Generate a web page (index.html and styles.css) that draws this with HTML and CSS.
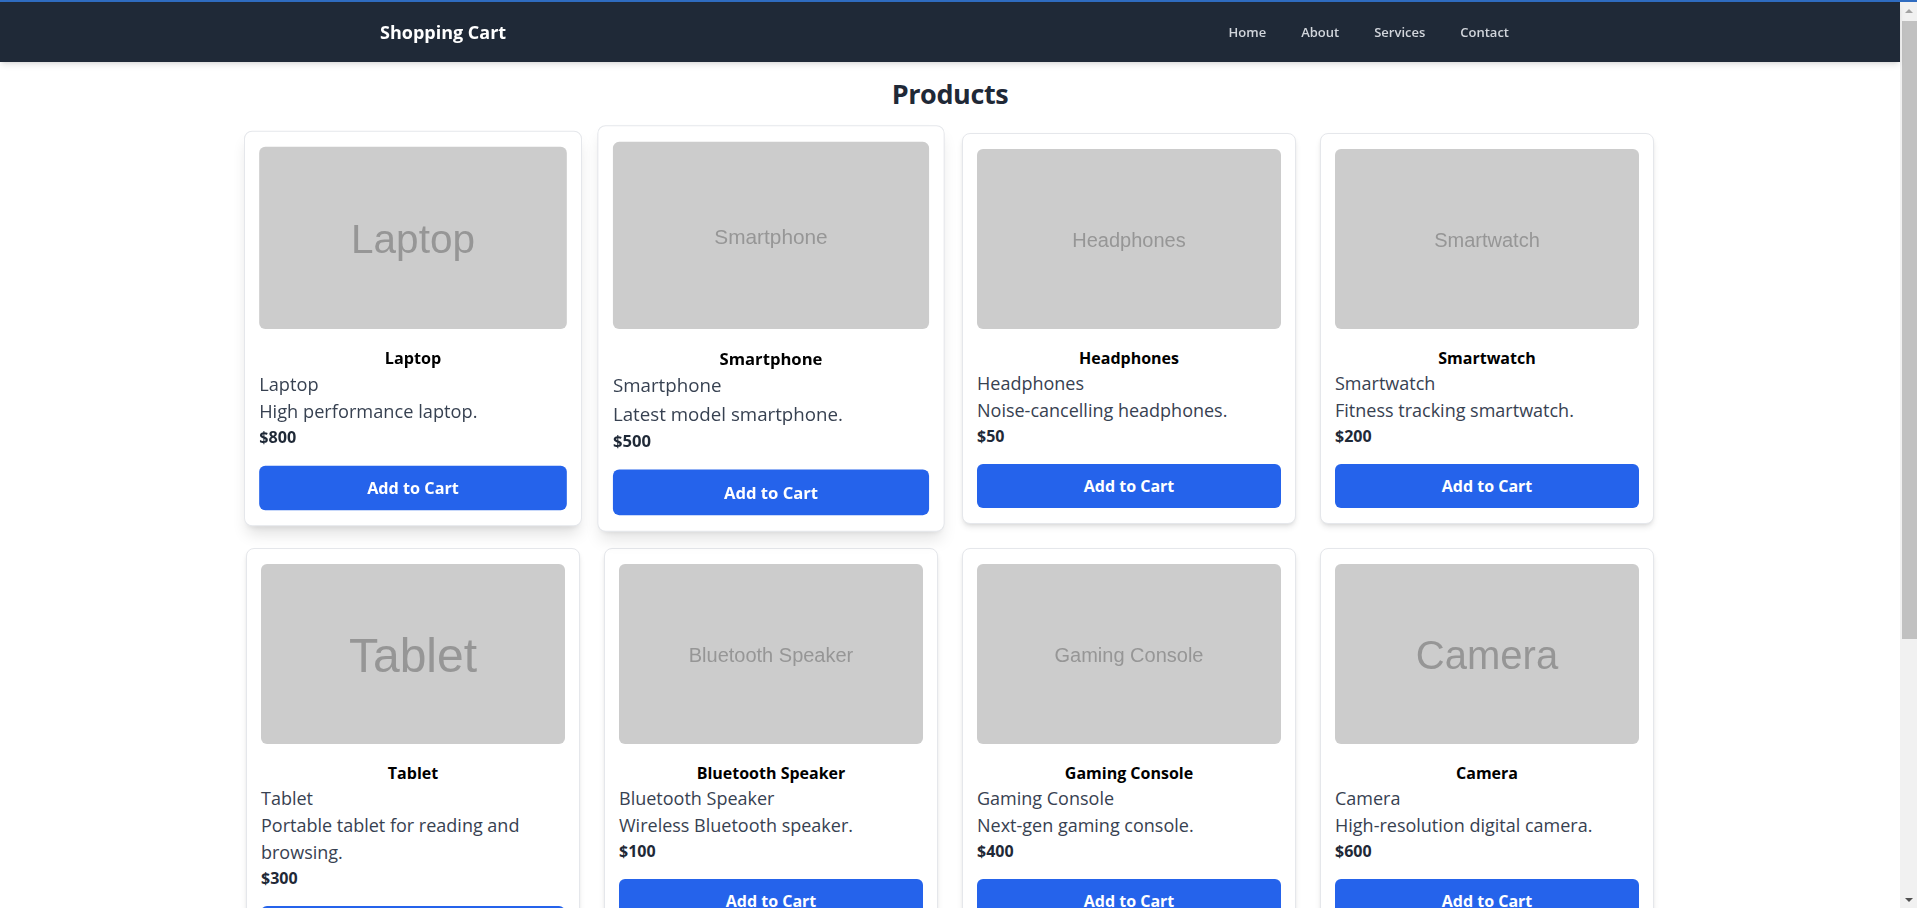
FILE: index.html
```html
<!DOCTYPE html>
<html lang="en">
<head>
<meta charset="utf-8">
<title>Shopping Cart</title>
<link rel="stylesheet" href="styles.css">
</head>
<body>
<div class="accent-line"></div>
<div class="page">
  <header class="topbar">
    <div class="topbar-inner">
      <div class="brand">Shopping Cart</div>
      <nav class="nav">
        <a href="#" class="nav-link">Home</a>
        <a href="#" class="nav-link">About</a>
        <a href="#" class="nav-link">Services</a>
        <a href="#" class="nav-link">Contact</a>
      </nav>
    </div>
  </header>
  <main class="main">
    <h1 class="page-title">Products</h1>
    <div class="grid">
      <div class="card card-leaving">
        <div class="thumb"><span class="thumb-text t40">Laptop</span></div>
        <h2 class="card-title">Laptop</h2>
        <p class="card-text">Laptop</p>
        <p class="card-text">High performance laptop.</p>
        <p class="price">$800</p>
        <button class="btn">Add to Cart</button>
      </div>
      <div class="card card-hover">
        <div class="thumb"><span class="thumb-text t20">Smartphone</span></div>
        <h2 class="card-title">Smartphone</h2>
        <p class="card-text">Smartphone</p>
        <p class="card-text">Latest model smartphone.</p>
        <p class="price">$500</p>
        <button class="btn">Add to Cart</button>
      </div>
      <div class="card">
        <div class="thumb"><span class="thumb-text t20">Headphones</span></div>
        <h2 class="card-title">Headphones</h2>
        <p class="card-text">Headphones</p>
        <p class="card-text">Noise-cancelling headphones.</p>
        <p class="price">$50</p>
        <button class="btn">Add to Cart</button>
      </div>
      <div class="card">
        <div class="thumb"><span class="thumb-text t20">Smartwatch</span></div>
        <h2 class="card-title">Smartwatch</h2>
        <p class="card-text">Smartwatch</p>
        <p class="card-text">Fitness tracking smartwatch.</p>
        <p class="price">$200</p>
        <button class="btn">Add to Cart</button>
      </div>
      <div class="card">
        <div class="thumb"><span class="thumb-text t48">Tablet</span></div>
        <h2 class="card-title">Tablet</h2>
        <p class="card-text">Tablet</p>
        <p class="card-text">Portable tablet for reading and browsing.</p>
        <p class="price">$300</p>
        <button class="btn">Add to Cart</button>
      </div>
      <div class="card">
        <div class="thumb"><span class="thumb-text t20">Bluetooth Speaker</span></div>
        <h2 class="card-title">Bluetooth Speaker</h2>
        <p class="card-text">Bluetooth Speaker</p>
        <p class="card-text">Wireless Bluetooth speaker.</p>
        <p class="price">$100</p>
        <button class="btn">Add to Cart</button>
      </div>
      <div class="card">
        <div class="thumb"><span class="thumb-text t20">Gaming Console</span></div>
        <h2 class="card-title">Gaming Console</h2>
        <p class="card-text">Gaming Console</p>
        <p class="card-text">Next-gen gaming console.</p>
        <p class="price">$400</p>
        <button class="btn">Add to Cart</button>
      </div>
      <div class="card">
        <div class="thumb"><span class="thumb-text t40">Camera</span></div>
        <h2 class="card-title">Camera</h2>
        <p class="card-text">Camera</p>
        <p class="card-text">High-resolution digital camera.</p>
        <p class="price">$600</p>
        <button class="btn">Add to Cart</button>
      </div>
    </div>
  </main>
</div>
<div class="scrollbar" aria-hidden="true">
  <div class="sb-arrow sb-up"></div>
  <div class="sb-track"><div class="sb-thumb"></div></div>
  <div class="sb-arrow sb-down"></div>
</div>
</body>
</html>
```
FILE: styles.css
```css
* { box-sizing: border-box; }
body {
  margin: 0;
  font-family: "Open Sans", "Noto Sans", sans-serif;
  color: #1f2937;
  background: #ffffff;
}
.accent-line {
  height: 2px;
  background: #2f6cc0;
}
.page {
  margin-right: 17px;
}
.topbar {
  background: #1f2937;
  height: 60px;
  box-shadow: 0 4px 6px -1px rgba(0,0,0,0.1), 0 2px 4px -2px rgba(0,0,0,0.1);
  position: relative;
  z-index: 2;
}
.topbar-inner {
  max-width: 1142px;
  height: 60px;
  margin: 0 auto;
  display: flex;
  align-items: center;
  justify-content: space-between;
}
.brand {
  color: #ffffff;
  font-weight: 700;
  font-size: 18px;
  line-height: 28px;
  padding-left: 1px;
}
.nav { display: flex; }
.nav-link {
  color: #d1d5db;
  text-decoration: none;
  font-size: 13px;
  font-weight: 600;
  line-height: 20px;
  padding: 0 12px 0 23px;
}
.main {
  max-width: 1536px;
  margin: 0 auto;
  padding: 14px 64px 40px;
}
.page-title {
  margin: 0 0 21px;
  text-align: center;
  font-size: 27px;
  letter-spacing: -0.4px;
  line-height: 36px;
  font-weight: 700;
  color: #1f2937;
}
.grid {
  display: grid;
  grid-template-columns: repeat(4, 1fr);
  gap: 24px;
}
.card {
  background: #ffffff;
  border: 1px solid #e5e7eb;
  border-radius: 8px;
  padding: 15px 14px 15px;
  box-shadow: 0 4px 6px -1px rgba(0,0,0,0.1), 0 2px 4px -2px rgba(0,0,0,0.1);
}
.card-hover {
  transform: scale(1.04);
  box-shadow: 0 10px 15px -3px rgba(0,0,0,0.1), 0 4px 6px -4px rgba(0,0,0,0.1);
}
.card-leaving {
  transform: scale(1.012);
  box-shadow: 0 10px 15px -3px rgba(0,0,0,0.12), 0 4px 6px -4px rgba(0,0,0,0.1);
}
.thumb {
  height: 180px;
  background: #cccccc;
  border-radius: 6px;
  display: flex;
  align-items: center;
  justify-content: center;
  padding-top: 3px;
}
.thumb-text {
  font-family: "Liberation Sans", Arial, sans-serif;
  color: #969696;
  filter: blur(0.45px);
}
.t20 { font-size: 20px; }
.t40 { font-size: 40px; }
.t48 { font-size: 48px; }
.card-title {
  margin: 17px 0 0;
  text-align: center;
  font-size: 16px;
  line-height: 24px;
  font-weight: 700;
  color: #000000;
}
.card-text {
  margin: 0;
  font-size: 18px;
  line-height: 27px;
  color: #374151;
}
.price {
  margin: 0;
  font-size: 16px;
  line-height: 24px;
  font-weight: 700;
  color: #1f2937;
}
.btn {
  display: block;
  width: 100%;
  margin-top: 16px;
  height: 44px;
  border: 0;
  border-radius: 6px;
  background: #2563eb;
  color: #ffffff;
  font-family: inherit;
  font-size: 16px;
  font-weight: 700;
}
.scrollbar {
  position: fixed;
  top: 2px;
  right: 0;
  bottom: 0;
  width: 17px;
  background: #f1f1f1;
  display: flex;
  flex-direction: column;
}
.sb-arrow {
  height: 17px;
  display: flex;
  align-items: center;
  justify-content: center;
}
.sb-up::before {
  content: "";
  border-left: 4px solid transparent;
  border-right: 4px solid transparent;
  border-bottom: 4px solid #a3a3a3;
}
.sb-down::before {
  content: "";
  border-left: 4px solid transparent;
  border-right: 4px solid transparent;
  border-top: 4px solid #505050;
}
.sb-track {
  flex: 1;
  padding: 2px 0 0 2px;
}
.sb-thumb {
  height: 618px;
  background: #c1c1c1;
}
```
